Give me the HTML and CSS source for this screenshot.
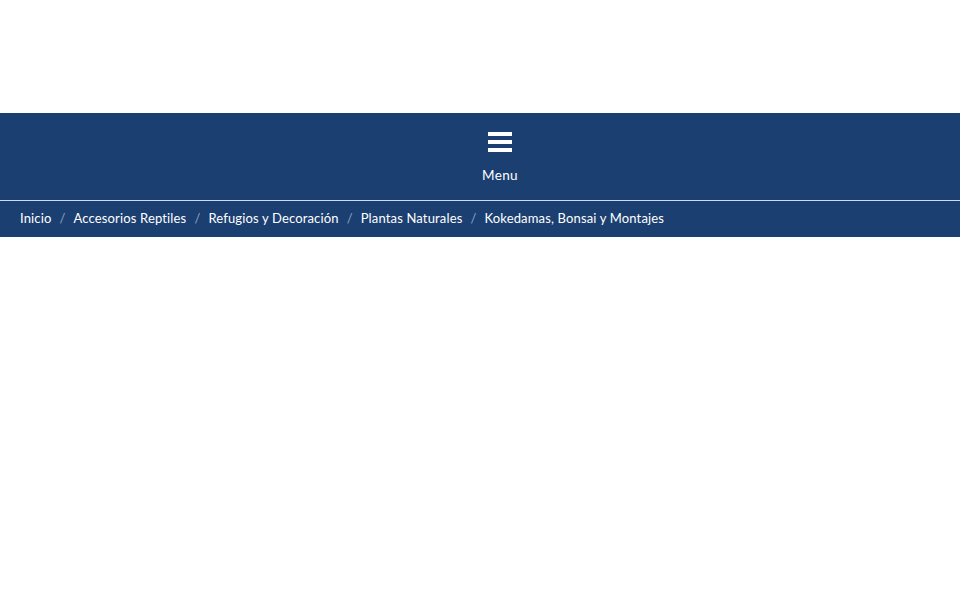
FILE: index.html
```html
<!DOCTYPE html>
<html lang="es">
<head>
    <meta charset="UTF-8">
    <meta name="viewport" content="width=device-width, initial-scale=1.0">
    <title>Kokedamas, Bonsai y Montajes</title>
    <link rel="stylesheet" href="styles.css">
</head>
<body>

    <!-- Header space -->
    <div class="top-space"></div>

    <!-- Main navigation -->
    <nav class="main-nav">
        <button class="menu-toggle">
            <span class="bars">
                <span></span>
                <span></span>
                <span></span>
            </span>
            <span class="menu-label">Menu</span>
        </button>
    </nav>

    <!-- Breadcrumb -->
    <div class="breadcrumb">
        <a href="#">Inicio</a>
        <span class="sep">/</span>
        <a href="#">Accesorios Reptiles</a>
        <span class="sep">/</span>
        <a href="#">Refugios y Decoración</a>
        <span class="sep">/</span>
        <a href="#">Plantas Naturales</a>
        <span class="sep">/</span>
        <span class="current">Kokedamas, Bonsai y Montajes</span>
    </div>

</body>
</html>
```

FILE: styles.css
```css
body {
    margin: 0;
    font-family: Lato, "Open Sans", sans-serif;
    background-color: #fff;
    color: #333;
}
.top-space {
    height: 113px;
}
.main-nav {
    height: 87px;
    background-color: #1b3f71;
    display: flex;
    justify-content: center;
    border-bottom: 1px solid #c9dcf0;
}
.menu-toggle {
    margin-left: 40px;
    margin-top: 19px;
    padding: 0;
    background: none;
    border: none;
    color: #fff;
    display: flex;
    flex-direction: column;
    align-items: center;
    align-self: flex-start;
    cursor: pointer;
}
.bars {
    display: flex;
    flex-direction: column;
    gap: 4px;
    width: 24px;
}
.bars span {
    display: block;
    height: 4px;
    background-color: #fff;
}
.menu-label {
    margin-top: 15px;
    font-family: Lato, sans-serif;
    font-size: 13.5px;
    letter-spacing: 0.4px;
}
.breadcrumb {
    height: 34px;
    padding: 0 20px 2px;
    background-color: #1b3f71;
    display: flex;
    align-items: center;
    font-size: 13px;
    letter-spacing: 0.15px;
    color: #fff;
}
.breadcrumb a {
    color: #fff;
    text-decoration: none;
}
.breadcrumb .sep {
    color: #8ea3c2;
    margin: 0 8px;
}
```
